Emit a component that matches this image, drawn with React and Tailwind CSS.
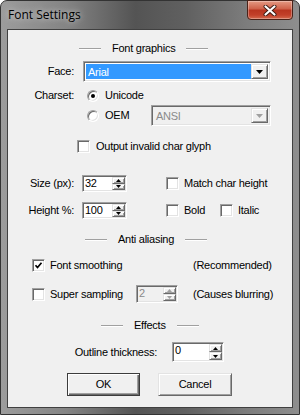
const sunken =
  "border border-t-[#a0a0a0] border-l-[#a0a0a0] border-b-white border-r-white shadow-[inset_1px_1px_0_#696969,inset_-1px_-1px_0_#e3e3e3]";
const raised =
  "border border-t-[#e3e3e3] border-l-[#e3e3e3] border-b-[#696969] border-r-[#696969] shadow-[inset_1px_1px_0_#fff,inset_-1px_-1px_0_#a0a0a0]";

function Check({ checked }) {
  return (
    <span className={`w-[13px] h-[13px] shrink-0 bg-white flex items-center justify-center ${sunken}`}>
      {checked && (
        <svg width="9" height="9" viewBox="0 0 9 9">
          <polyline points="1.5,4.2 3.5,6.5 7.5,1.8" fill="none" stroke="#000" strokeWidth="1.7" />
        </svg>
      )}
    </span>
  );
}

function Radio({ checked }) {
  return (
    <span className="w-[12px] h-[12px] shrink-0 rounded-full bg-white border border-t-[#a0a0a0] border-l-[#a0a0a0] border-b-white border-r-white shadow-[inset_1px_1px_0_#696969,inset_-1px_-1px_0_#e3e3e3] flex items-center justify-center">
      {checked && <span className="w-[4px] h-[4px] rounded-full bg-black" />}
    </span>
  );
}

function Section({ label, pl }) {
  return (
    <div className={`flex items-center h-[16px] gap-[11px] ${pl}`}>
      <span className="w-[22px] h-px bg-[#a0a0a0] shadow-[0_1px_0_#fff]" />
      <span>{label}</span>
      <span className="w-[22px] h-px bg-[#a0a0a0] shadow-[0_1px_0_#fff]" />
    </div>
  );
}

function Arrow({ up, disabled }) {
  return (
    <svg width="5" height="3" viewBox="0 0 5 3">
      <polygon points={up ? "2.5,0 5,3 0,3" : "0,0 5,0 2.5,3"} fill={disabled ? "#a0a0a0" : "#000"} />
    </svg>
  );
}

function Spin({ value, w, h, disabled }) {
  return (
    <div className={`flex shrink-0 ${w} ${h} ${disabled ? "bg-[#f0f0f0]" : "bg-white"} ${sunken}`}>
      <span className={`flex-1 pl-[2px] pt-[1px] leading-[13px] ${disabled ? "text-[#8a8a8a]" : ""}`}>{value}</span>
      <div className="w-[15px] flex flex-col p-px">
        <span className={`flex-1 bg-[#f0f0f0] flex items-center justify-center ${raised}`}>
          <Arrow up disabled={disabled} />
        </span>
        <span className={`flex-1 bg-[#f0f0f0] flex items-center justify-center ${raised}`}>
          <Arrow disabled={disabled} />
        </span>
      </div>
    </div>
  );
}

function Combo({ value, w, selected, disabled }) {
  return (
    <div className={`flex shrink-0 h-[21px] ${w} ${disabled ? "bg-[#f0f0f0]" : "bg-white"} ${sunken} p-[2px]`}>
      <span
        className={`flex-1 pl-[2px] leading-[17px] ${selected ? "bg-[#3399ff] text-white" : ""} ${disabled ? "text-[#8a8a8a]" : ""}`}
      >
        {value}
      </span>
      <span className={`w-[17px] bg-[#f0f0f0] flex items-center justify-center ${raised}`}>
        <svg width="7" height="4" viewBox="0 0 7 4">
          <polygon points="0,0 7,0 3.5,4" fill={disabled ? "#a0a0a0" : "#000"} />
        </svg>
      </span>
    </div>
  );
}

export default function App() {
  return (
    <div className="w-[300px] h-[415px] bg-white font-['Liberation_Sans',Arial,sans-serif] text-[11px] tracking-[-0.25px] text-black">
      <div className="w-full h-full rounded-t-[7px] border border-[#333] bg-[linear-gradient(90deg,#9c9c9c_0%,#848484_22%,#545454_45%,#606060_62%,#7c7c7c_82%,#8e8e8e_100%)] flex flex-col">
        {/* title bar */}
        <div className="h-[28px] shrink-0 flex items-start justify-between">
          <span className="pl-[7px] pt-[5px] font-['Open_Sans',sans-serif] text-[12px] tracking-normal text-black [text-shadow:0_0_6px_rgba(255,255,255,0.8)]">
            Font Settings
          </span>
          <div className="-mt-px mr-[6px] w-[46px] h-[20px] rounded-b-[4px] border border-[#4a2218] bg-[linear-gradient(180deg,#e59a84_0%,#d0634b_42%,#b93520_52%,#c2402a_78%,#d36a4e_100%)] shadow-[inset_0_0_0_1px_rgba(255,255,255,0.3)] flex items-center justify-center">
            <svg width="14" height="11" viewBox="0 0 14 11">
              <path d="M2.5 1.5 L11.5 9.5 M11.5 1.5 L2.5 9.5" stroke="#3b1a12" strokeWidth="4" strokeLinecap="round" />
              <path d="M2.5 1.5 L11.5 9.5 M11.5 1.5 L2.5 9.5" stroke="#fff" strokeWidth="2.2" strokeLinecap="round" />
            </svg>
          </div>
        </div>

        {/* client area */}
        <div className="mx-[6px] mb-[6px] flex-1 border border-[#404040] bg-[#f0f0f0] flex flex-col">
          <div className="mt-[10px]">
            <Section label="Font graphics" pl="pl-[71px]" />
          </div>

          <div className="mt-[5px] h-[21px] flex items-center">
            <span className="w-[66px] text-right">Face:</span>
            <div className="ml-[9px]">
              <Combo value="Arial" w="w-[188px]" selected />
            </div>
          </div>

          <div className="mt-[7px] h-[13px] flex items-center">
            <span className="w-[66px] text-right">Charset:</span>
            <div className="ml-[13px] flex items-center gap-[6px]">
              <Radio checked />
              <span>Unicode</span>
            </div>
          </div>

          <div className="mt-[3px] h-[21px] flex items-center">
            <div className="ml-[79px] w-[64px] flex items-center gap-[6px]">
              <Radio />
              <span>OEM</span>
            </div>
            <Combo value="ANSI" w="w-[120px]" disabled />
          </div>

          <div className="mt-[14px] h-[13px] flex items-center pl-[69px] gap-[6px]">
            <Check />
            <span>Output invalid char glyph</span>
          </div>

          <div className="mt-[22px] h-[17px] flex items-center">
            <span className="w-[66px] text-right">Size (px):</span>
            <div className="ml-[8px]">
              <Spin value="32" w="w-[45px]" h="h-[17px]" />
            </div>
            <div className="ml-[39px] flex items-center gap-[5px]">
              <Check />
              <span>Match char height</span>
            </div>
          </div>

          <div className="mt-[10px] h-[17px] flex items-center">
            <span className="w-[66px] text-right">Height %:</span>
            <div className="ml-[8px]">
              <Spin value="100" w="w-[45px]" h="h-[17px]" />
            </div>
            <div className="ml-[39px] w-[54px] flex items-center gap-[5px]">
              <Check />
              <span>Bold</span>
            </div>
            <div className="flex items-center gap-[5px]">
              <Check />
              <span>Italic</span>
            </div>
          </div>

          <div className="mt-[12px]">
            <Section label="Anti aliasing" pl="pl-[77px]" />
          </div>

          <div className="mt-[12px] h-[13px] flex items-center pl-[24px]">
            <div className="w-[161px] flex items-center gap-[5px]">
              <Check checked />
              <span>Font smoothing</span>
            </div>
            <span>(Recommended)</span>
          </div>

          <div className="mt-[13px] h-[18px] flex items-center pl-[24px]">
            <div className="w-[104px] flex items-center gap-[5px]">
              <Check />
              <span>Super sampling</span>
            </div>
            <Spin value="2" w="w-[42px]" h="h-[18px]" disabled />
            <span className="ml-[15px]">(Causes blurring)</span>
          </div>

          <div className="mt-[14px]">
            <Section label="Effects" pl="pl-[93px]" />
          </div>

          <div className="mt-[9px] h-[20px] flex items-center">
            <span className="w-[149px] text-right">Outline thickness:</span>
            <div className="ml-[15px]">
              <Spin value="0" w="w-[52px]" h="h-[20px]" />
            </div>
          </div>

          <div className="mt-[11px] h-[23px] flex pl-[59px] gap-[18px]">
            <button className="w-[73px] h-[23px] border border-[#3c3c3c] bg-[#f0f0f0] shadow-[inset_1px_1px_0_#fff,inset_-1px_-1px_0_#696969,inset_-2px_-2px_0_#a0a0a0] tracking-[-0.25px]">
              OK
            </button>
            <button className={`w-[74px] h-[23px] bg-[#f0f0f0] ${raised} tracking-[-0.25px]`}>
              Cancel
            </button>
          </div>
        </div>
      </div>
    </div>
  );
}
